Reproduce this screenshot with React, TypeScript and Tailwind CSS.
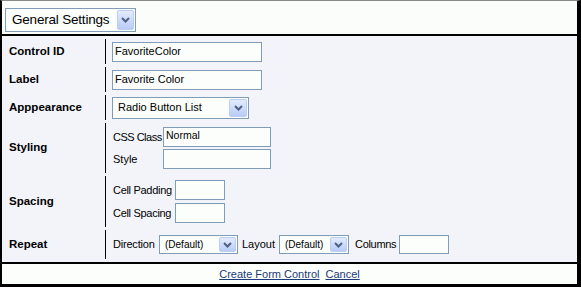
import React from 'react';

const font = { fontFamily: '"Liberation Sans", Arial, sans-serif' };

const Chevron = () => (
  <svg width="9" height="6" viewBox="0 0 9 6">
    <polyline points="1,1 4.5,4.5 8,1" fill="none" stroke="#4d6185" strokeWidth="2" />
  </svg>
);

const DropButton = ({ className = '' }: { className?: string }) => (
  <div
    className={`flex shrink-0 items-center justify-center rounded-[2px] border border-[#bccdf4] bg-gradient-to-b from-[#e3ebfd] to-[#b9cbf6] ${className}`}
  >
    <Chevron />
  </div>
);

const TextBox = ({ value = '', className = '' }: { value?: string; className?: string }) => (
  <div className={`flex shrink-0 items-center whitespace-nowrap border border-[#7f9db9] bg-[#fbfefb] pl-[2px] text-[11px] text-black ${className}`}>
    {value}
  </div>
);

const Select = ({ value, className = '', textClass = '', btnClass = '' }: { value: string; className?: string; textClass?: string; btnClass?: string }) => (
  <div className={`flex shrink-0 items-center justify-between border border-[#7f9db9] bg-[#fbfefb] pr-[1px] ${className}`}>
    <span className={`whitespace-nowrap ${textClass}`}>{value}</span>
    <DropButton className={btnClass} />
  </div>
);

const Row = ({ label, height, children }: { label: string; height: string; children: React.ReactNode }) => (
  <div className={`flex ${height}`}>
    <div className="flex w-[103px] shrink-0 items-center whitespace-nowrap pl-[7px] text-[11.5px] font-bold text-black">{label}</div>
    <div className="flex flex-1 flex-col justify-center border-l border-black pl-[6px]">{children}</div>
  </div>
);

const App = () => {
  return (
    <div className="h-[288px] w-[581px] bg-white" style={font}>
      <div className="flex h-[287px] flex-col border-t border-l-2 border-r-4 border-b-[3px] border-t-[#8a8a8a] border-l-black border-r-black border-b-black">
        {/* Header */}
        <div className="h-[35px] shrink-0 border-b-2 border-black bg-[#fbfdfb] pl-[3px] pt-[7px]">
          <div className="flex h-[24px] w-[131px] items-center justify-between border border-[#7f9db9] bg-[#fbfefb] pl-[6px] pr-[1px]">
            <span className="whitespace-nowrap text-[13.5px] tracking-[-0.2px] text-black">General Settings</span>
            <DropButton className="h-[20px] w-[17px]" />
          </div>
        </div>

        {/* Main */}
        <div className="flex h-[226px] shrink-0 flex-col gap-[3px] bg-[#f3f4fa] pt-[3px]">
          <Row label="Control ID" height="h-[25px]">
            <TextBox value="FavoriteColor" className="h-[20px] w-[150px]" />
          </Row>
          <Row label="Label" height="h-[25px]">
            <TextBox value="Favorite Color" className="h-[20px] w-[150px]" />
          </Row>
          <Row label="Apppearance" height="h-[25px]">
            <Select
              value="Radio Button List"
              className="h-[22px] w-[137px] pl-[5px]"
              textClass="text-[11px] text-black"
              btnClass="h-[18px] w-[18px]"
            />
          </Row>
          <Row label="Styling" height="h-[50px]">
            <div className="flex flex-col gap-[2px] text-[11px] text-black">
              <div className="flex items-center">
                <span className="w-[51px] shrink-0 whitespace-nowrap pl-px tracking-[-0.5px]">CSS Class</span>
                <div className="h-[20px] w-[108px] shrink-0 border border-[#7f9db9] bg-[#fbfefb] pl-[2px] text-[10.5px] leading-[14px]">Normal</div>
              </div>
              <div className="flex items-center">
                <span className="w-[51px] shrink-0 whitespace-nowrap pl-px">Style</span>
                <TextBox className="h-[20px] w-[108px]" />
              </div>
            </div>
          </Row>
          <Row label="Spacing" height="h-[51px]">
            <div className="flex flex-col gap-[3px] text-[11px] text-black">
              <div className="flex items-center">
                <span className="w-[63px] shrink-0 whitespace-nowrap pl-px tracking-[-0.3px]">Cell Padding</span>
                <TextBox className="h-[20px] w-[50px]" />
              </div>
              <div className="flex items-center">
                <span className="w-[63px] shrink-0 whitespace-nowrap pl-px tracking-[-0.3px]">Cell Spacing</span>
                <TextBox className="h-[20px] w-[50px]" />
              </div>
            </div>
          </Row>
          <Row label="Repeat" height="h-[29px]">
            <div className="flex items-center text-[11px] text-black">
              <span className="w-[47px] shrink-0 whitespace-nowrap pl-px tracking-[-0.2px]">Direction</span>
              <Select
                value="(Default)"
                className="h-[19px] w-[79px] pl-[5px]"
                textClass="text-[10px]"
                btnClass="h-[15px] w-[17px]"
              />
              <span className="ml-[4px] w-[37px] shrink-0 whitespace-nowrap">Layout</span>
              <Select
                value="(Default)"
                className="h-[19px] w-[70px] pl-[5px]"
                textClass="text-[10px]"
                btnClass="h-[15px] w-[17px]"
              />
              <span className="ml-[6px] w-[44px] shrink-0 whitespace-nowrap tracking-[-0.3px]">Columns</span>
              <TextBox className="h-[19px] w-[50px]" />
            </div>
          </Row>
        </div>

        {/* Footer */}
        <div className="flex flex-1 items-center justify-center gap-[6px] border-t-2 border-black bg-[#fbfefb] text-[11px] text-[#1c3a7a]">
          <a className="underline" href="#">Create Form Control</a>
          <a className="underline" href="#">Cancel</a>
        </div>
      </div>
    </div>
  );
};

export default App;
